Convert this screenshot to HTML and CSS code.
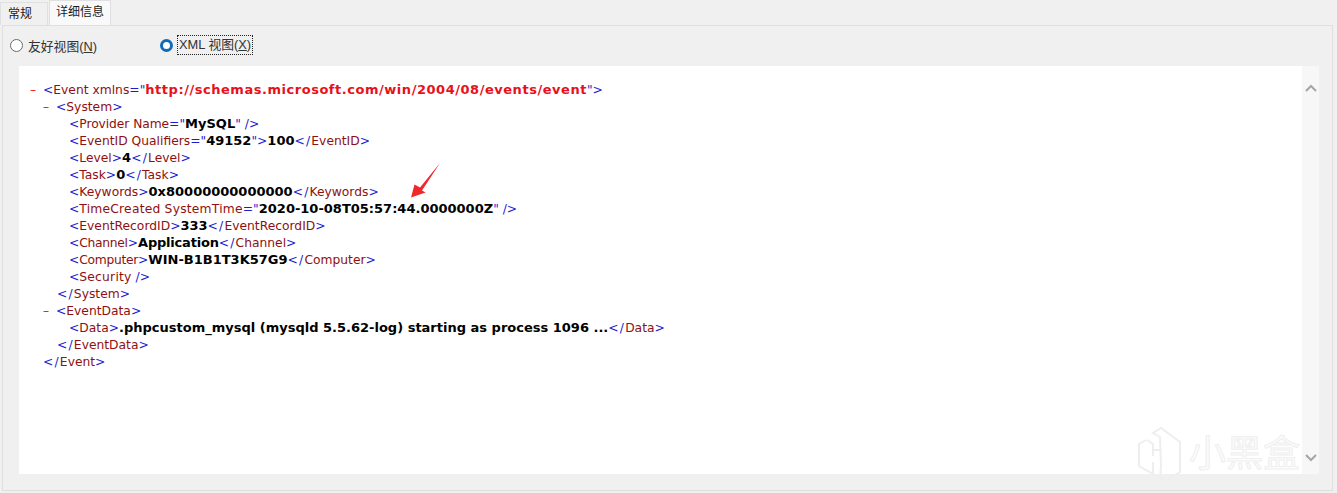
FILE: index.html
```html
<!DOCTYPE html>
<html lang="zh">
<head>
<meta charset="utf-8">
<title>详细信息</title>
<link rel="stylesheet" href="styles.css">
</head>
<body>
<div class="tabs">
  <div class="tab">常规</div>
  <div class="tab active">详细信息</div>
</div>
<main class="panel">
  <div class="views">
    <label class="radio first"><span class="dot"></span><span>友好视图(<u>N</u>)</span></label>
    <label class="radio"><span class="dot on"></span><span class="focus">XML 视图(<u>X</u>)</span></label>
  </div>
  <section class="viewer">
    <div class="xml">
      <div class="line"><i>–</i><b>&lt;</b><em>Event xmlns</em><b>="</b><strong class="url">http://schemas.microsoft.com/win/2004/08/events/event</strong><b>"&gt;</b></div>
      <div class="nest">
        <div class="line"><i>–</i><b>&lt;</b><em>System</em><b>&gt;</b></div>
        <div class="nest2">
          <div class="line"><b>&lt;</b><em class="near">Provider Name</em><b>="</b><strong>MySQL</strong><b>" /&gt;</b></div>
          <div class="line"><b>&lt;</b><em>EventID Qualifiers</em><b>="</b><strong>49152</strong><b>"&gt;</b><strong>100</strong><b class="c">&lt;/</b><em>EventID</em><b>&gt;</b></div>
          <div class="line"><b>&lt;</b><em>Level</em><b>&gt;</b><strong>4</strong><b class="c">&lt;/</b><em>Level</em><b>&gt;</b></div>
          <div class="line"><b>&lt;</b><em>Task</em><b>&gt;</b><strong>0</strong><b class="c">&lt;/</b><em>Task</em><b>&gt;</b></div>
          <div class="line"><b>&lt;</b><em>Keywords</em><b>&gt;</b><strong>0x80000000000000</strong><b class="c">&lt;/</b><em>Keywords</em><b>&gt;</b></div>
          <div class="line"><b>&lt;</b><em class="wide">TimeCreated SystemTime</em><b>="</b><strong>2020-10-08T05:57:44.0000000Z</strong><b>" /&gt;</b></div>
          <div class="line"><b>&lt;</b><em>EventRecordID</em><b>&gt;</b><strong>333</strong><b class="c">&lt;/</b><em>EventRecordID</em><b>&gt;</b></div>
          <div class="line"><b>&lt;</b><em class="tight">Channel</em><b>&gt;</b><strong class="snug">Application</strong><b class="c">&lt;/</b><em>Channel</em><b>&gt;</b></div>
          <div class="line"><b>&lt;</b><em class="tight">Computer</em><b>&gt;</b><strong>WIN-B1B1T3K57G9</strong><b class="c">&lt;/</b><em>Computer</em><b>&gt;</b></div>
          <div class="line"><b>&lt;</b><em class="wide">Security</em><b> /&gt;</b></div>
        </div>
        <div class="line close"><b class="c">&lt;/</b><em>System</em><b>&gt;</b></div>
        <div class="line"><i>–</i><b>&lt;</b><em>EventData</em><b>&gt;</b></div>
        <div class="nest2">
          <div class="line"><b>&lt;</b><em>Data</em><b>&gt;</b><strong>.phpcustom_mysql (mysqld 5.5.62-log) starting as process 1096 ...</strong><b class="c">&lt;/</b><em>Data</em><b>&gt;</b></div>
        </div>
        <div class="line close"><b class="c">&lt;/</b><em>EventData</em><b>&gt;</b></div>
      </div>
      <div class="line end"><b class="c">&lt;/</b><em>Event</em><b>&gt;</b></div>
    </div>
    <aside class="scrollbar">
      <svg class="chev" viewBox="0 0 12 8" width="12" height="8"><path d="M1 7 6 2l5 5" fill="none" stroke="#a6a6a6" stroke-width="2"/></svg>
      <svg class="chev" viewBox="0 0 12 8" width="12" height="8"><path d="M1 1l5 5 5-5" fill="none" stroke="#a6a6a6" stroke-width="2"/></svg>
    </aside>
  </section>
</main>
<svg class="arrow" viewBox="0 0 34 38" width="34" height="38"><path d="M33 0 13 24.500 7.500 21.500 4 34.500 18.500 29.500 15 27.500Z" fill="#f0282a"/></svg>
<div class="mark">
  <svg viewBox="0 0 46 56" width="46" height="56"><path d="M9 15 2 19v22l14 8V37M16 31V19l-6-4M24 3l-8 5 7 4 1 30-1 11 5 3 15-9V17L24 3ZM16 25l9 0" fill="none" stroke="#eeeeee" stroke-width="2"/></svg>
  <span>小黑盒</span>
</div>
</body>
</html>
```
FILE: styles.css
```css
* { box-sizing: border-box; }
html, body { margin: 0; height: 100%; }
body {
  background: #f0f0f0;
  width: 1337px;
  height: 493px;
  overflow: hidden;
  position: relative;
  font-family: "Liberation Sans", "Noto Sans CJK SC", sans-serif;
  color: #1a1a1a;
}
.tabs {
  display: flex;
  height: 25px;
  align-items: flex-end;
}
.tab {
  width: 48px;
  height: 23px;
  font-size: 12px;
  line-height: 22px;
  padding-left: 7px;
  border: 1px solid #e0e0e0;
  border-bottom: 0;
}
.tab.active {
  width: 62px;
  height: 25px;
  margin-left: 1px;
  background: #f9f9f9;
  padding-left: 6px;
  line-height: 22px;
}
.panel {
  margin: 0 4px 0 2px;
  height: 466px;
  border: 1px solid #dfdfdf;
  padding: 0 14px 16px 16px;
  background: #f0f0f0;
}
.views {
  display: flex;
  height: 40px;
  padding-top: 8px;
  margin-left: -9px;
}
.radio {
  display: flex;
  align-items: center;
  height: 22px;
  font-size: 12.800px;
  color: #333;
  gap: 5px;
}
.radio.first { width: 150px; }
.dot {
  width: 13px;
  height: 13px;
  border-radius: 50%;
  border: 1px solid #6a6a6a;
  background: #fff;
}
.dot.on {
  border: 3.500px solid #0f6cbd;
}
.focus {
  outline: 1px dotted #222;
  padding: 0 1px;
  height: 18px;
  line-height: 17px;
}
.viewer {
  display: flex;
  width: 1300px;
  height: 408px;
  background: #fff;
}
.xml {
  flex: 1;
  padding: 16px 0 0 11px;
  font-family: "DejaVu Sans", Verdana, sans-serif;
  font-size: 12.300px;
  line-height: 17px;
  white-space: nowrap;
}
.line { height: 17px; }
.line b { font-weight: 400; color: #1b1bd0; }
.line b.c { letter-spacing: 1.200px; }
.line em { font-style: normal; color: #8f1010; }
.line em.near { letter-spacing: -0.080px; }
.line em.tight { letter-spacing: -0.300px; }
.line em.wide { letter-spacing: 0.220px; }
.line strong { font-size: 13px; line-height: 1; font-weight: 700; color: #000; }
.line strong.snug { letter-spacing: -0.200px; }
.line strong.url { color: #e8101a; letter-spacing: 0.530px; }
.line i {
  display: inline-block;
  width: 13px;
  font-style: normal;
  color: #e8101a;
}
.nest { margin-left: 13px; }
.nest2 { margin-left: 26px; }
.close { margin-left: 14px; }
.end { margin-left: 13px; }
.scrollbar {
  width: 17px;
  background: #f7f7f7;
  display: flex;
  flex-direction: column;
  justify-content: space-between;
  align-items: center;
  padding: 18px 0 12px;
}
.arrow {
  position: absolute;
  left: 407px;
  top: 163px;
}
.mark {
  position: absolute;
  left: 1137px;
  top: 425px;
  display: flex;
  align-items: center;
  gap: 6px;
}
.mark span {
  font-family: "Noto Sans CJK SC", sans-serif;
  font-size: 37px;
  line-height: 52px;
  margin-top: -4px;
  color: #fcfcfc;
  -webkit-text-stroke: 1px #efefef;
}
```
